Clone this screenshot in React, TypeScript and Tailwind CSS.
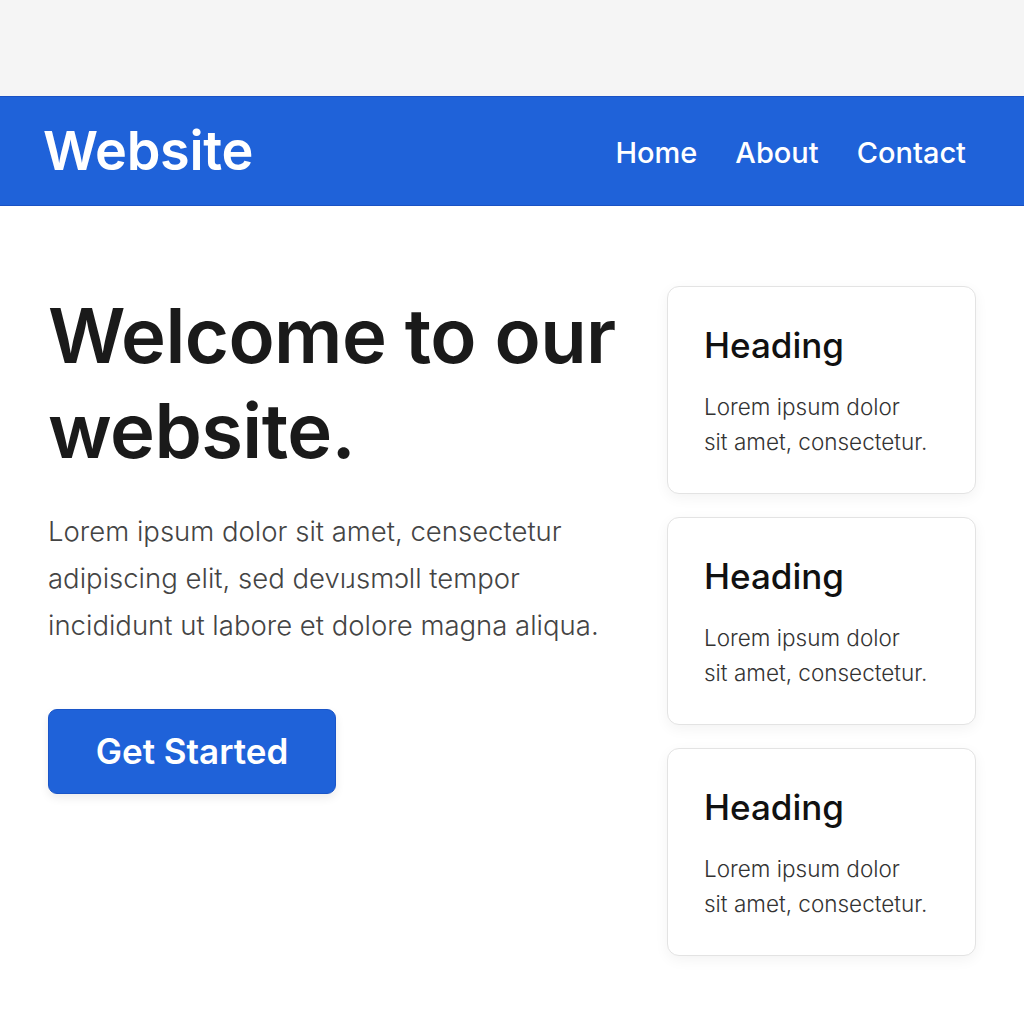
import React from "react";

const cards = [0, 1, 2];

export default function App() {
  return (
    <div className="min-h-[1024px] w-[1024px] bg-white" style={{ fontFamily: "Inter, 'Noto Sans', sans-serif" }}>
      <div className="h-[96px] bg-[#f5f5f5]" />
      <header className="flex h-[110px] items-center justify-between border-y border-[#1a52c4] bg-[#1f62d9] pl-[43px] pr-[58px]">
        <div className="text-[54px] font-semibold leading-none tracking-[-0.3px] text-white">Website</div>
        <nav className="flex items-center gap-[38px] pt-[4px] text-[29px] font-medium text-white">
          <span>Home</span>
          <span>About</span>
          <span>Contact</span>
        </nav>
      </header>
      <main className="flex justify-between px-12 pt-[80px]">
        <div className="flex w-[580px] flex-col">
          <h1 className="mt-[2px] text-[76px] font-semibold leading-[95px] tracking-[-0.6px] text-[#1a1a1a]">
            Welcome to our
            <br />
            website.
          </h1>
          <p className="mt-[30px] text-[27.5px] font-light leading-[47px] text-[#444]">
            Lorem ipsum dolor sit amet, censectetur
            <br />
            adipiscing elit, sed devıɹsmɔll tempor
            <br />
            incididunt ut labore et dolore magna aliqua.
          </p>
          <button className="mt-[60px] flex h-[85px] w-[288px] items-center justify-center rounded-[9px] border border-[#1a55c8] bg-[#1f62d9] text-[35px] font-semibold text-white shadow-[0_4px_10px_rgba(0,0,0,0.08)]">
            Get Started
          </button>
        </div>
        <div className="flex w-[309px] flex-col gap-[23px]">
          {cards.map((i) => (
            <div
              key={i}
              className="rounded-[12px] border border-[#e3e3e3] bg-white px-[36px] pb-[34px] pt-[38px] shadow-[0_4px_14px_rgba(0,0,0,0.05)]"
            >
              <h2 className="text-[35px] font-medium leading-[40px] text-[#111]">Heading</h2>
              <p className="mt-[24px] text-[22.5px] font-light leading-[35px] text-[#333]">
                Lorem ipsum dolor
                <br />
                sit amet, consectetur.
              </p>
            </div>
          ))}
        </div>
      </main>
    </div>
  );
}
